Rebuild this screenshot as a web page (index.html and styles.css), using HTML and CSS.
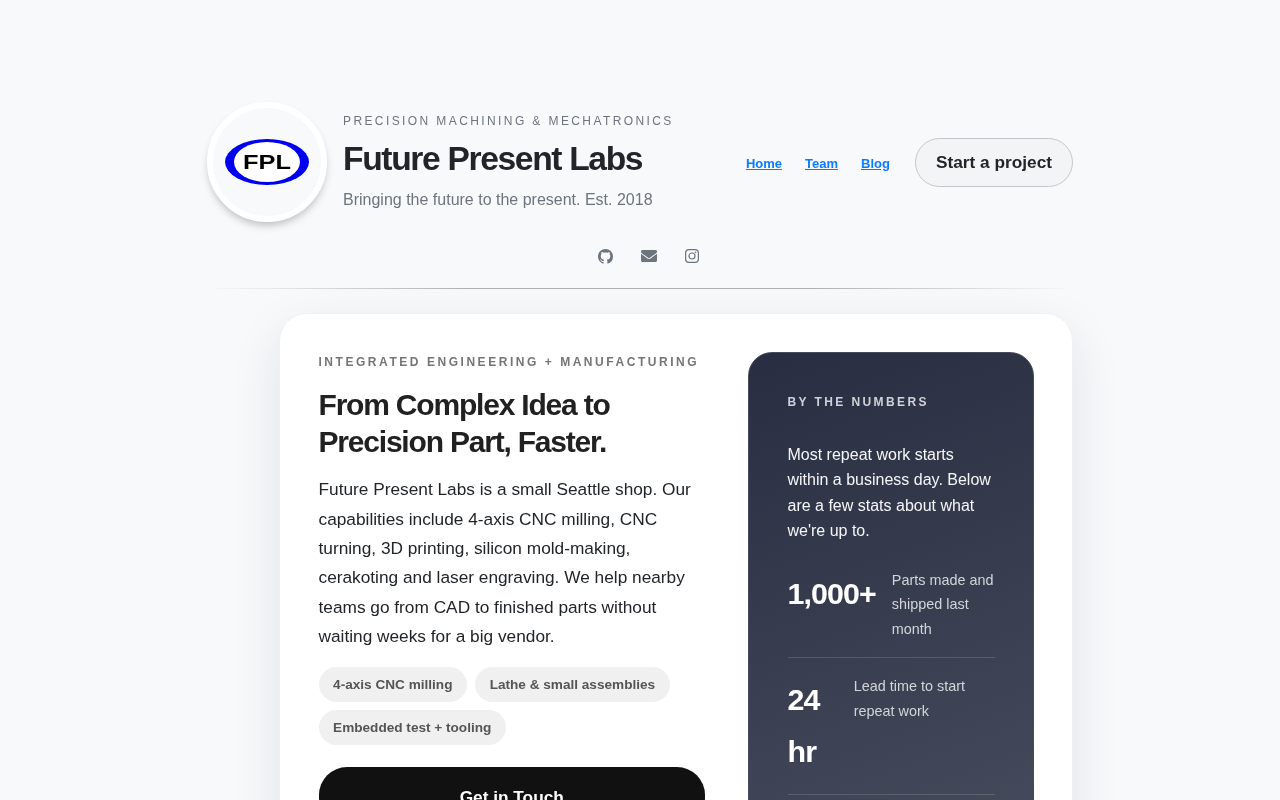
FILE: index.html
```html
<!DOCTYPE html>
<html lang="en">
<head>
  <meta charset="UTF-8" />
  <meta name="viewport" content="width=device-width, initial-scale=1.0"/>
  <title>Future Present Labs</title>
  <link rel="stylesheet" href="styles.css">
</head>
<body>
  <div class="page">
    <!-- Masthead -->
    <header class="masthead">
      <div class="logo">
        <svg width="88" height="52" viewBox="0 0 88 52">
          <ellipse cx="44" cy="26" rx="42" ry="23" fill="#0000f0"/>
          <ellipse cx="44" cy="26" rx="33" ry="20" fill="#fff"/>
          <text class="logo-text" x="44" y="33" text-anchor="middle" textLength="48" lengthAdjust="spacingAndGlyphs">FPL</text>
        </svg>
      </div>
      <div class="brand">
        <p class="kicker">PRECISION MACHINING &amp; MECHATRONICS</p>
        <h1>Future Present Labs</h1>
        <p class="tagline">Bringing the future to the present. Est. 2018</p>
      </div>
      <nav class="nav">
        <a href="#">Home</a>
        <a href="#">Team</a>
        <a href="#">Blog</a>
        <a href="#" class="btn-outline">Start a project</a>
      </nav>
    </header>

    <div class="socials">
      <a href="#" aria-label="GitHub">
        <svg width="15" height="15" viewBox="0 0 16 16"><path d="M8 0C3.58 0 0 3.58 0 8c0 3.54 2.29 6.53 5.47 7.59.4.07.55-.17.55-.38 0-.19-.01-.82-.01-1.49-2.01.37-2.53-.49-2.69-.94-.09-.23-.48-.94-.82-1.13-.28-.15-.68-.52-.01-.53.63-.01 1.08.58 1.23.82.72 1.21 1.87.87 2.33.66.07-.52.28-.87.51-1.07-1.78-.2-3.64-.89-3.64-3.95 0-.87.31-1.59.82-2.15-.08-.2-.36-1.02.08-2.12 0 0 .67-.21 2.2.82.64-.18 1.32-.27 2-.27.68 0 1.36.09 2 .27 1.53-1.04 2.2-.82 2.2-.82.44 1.1.16 1.92.08 2.12.51.56.82 1.27.82 2.15 0 3.07-1.87 3.75-3.65 3.95.29.25.54.73.54 1.48 0 1.07-.01 1.93-.01 2.2 0 .21.15.46.55.38A8.013 8.013 0 0016 8c0-4.42-3.58-8-8-8z"/></svg>
      </a>
      <a href="#" aria-label="Email">
        <svg width="16" height="16" viewBox="0 0 512 512"><path d="M502.3 190.8c3.9-3.1 9.7-.2 9.7 4.7V400c0 26.5-21.5 48-48 48H48c-26.5 0-48-21.5-48-48V195.6c0-5 5.7-7.8 9.7-4.7 22.4 17.4 52.1 39.5 154.1 113.6 21.1 15.4 56.7 47.8 92.2 47.6 35.7.3 72-32.8 92.3-47.6 102-74.1 131.6-96.3 154-113.7zM256 320c23.2.4 56.6-29.2 73.4-41.4 132.7-96.3 142.8-104.7 173.4-128.7 5.8-4.5 9.2-11.5 9.2-18.9v-19c0-26.5-21.5-48-48-48H48C21.5 64 0 85.5 0 112v19c0 7.4 3.4 14.3 9.2 18.9 30.6 23.9 40.7 32.4 173.4 128.7 16.8 12.2 50.2 41.8 73.4 41.4z"/></svg>
      </a>
      <a href="#" aria-label="Instagram">
        <svg width="14" height="14" viewBox="0 0 14 14" class="outline-icon">
          <rect x="0.6" y="0.6" width="12.8" height="12.8" rx="3.4"/>
          <circle cx="7" cy="7" r="3"/>
          <circle class="dot" cx="10.6" cy="3.4" r="0.8"/>
        </svg>
      </a>
    </div>

    <div class="divider"></div>

    <!-- Hero card -->
    <main class="hero">
      <section class="hero-copy">
        <p class="eyebrow">INTEGRATED ENGINEERING + MANUFACTURING</p>
        <h2>From Complex Idea to Precision Part, Faster.</h2>
        <p class="lead">Future Present Labs is a small Seattle shop. Our capabilities include 4-axis CNC milling, CNC turning, 3D printing, silicon mold-making, cerakoting and laser engraving. We help nearby teams go from CAD to finished parts without waiting weeks for a big vendor.</p>
        <div class="tags">
          <span class="tag">4-axis CNC milling</span>
          <span class="tag">Lathe &amp; small assemblies</span>
          <span class="tag">Embedded test + tooling</span>
        </div>
        <a href="#" class="btn-dark">Get in Touch</a>
      </section>

      <aside class="panel">
        <p class="panel-label">BY THE NUMBERS</p>
        <p class="panel-text">Most repeat work starts within a business day. Below are a few stats about what we're up to.</p>
        <div class="stat">
          <div class="stat-num">1,000+</div>
          <div class="stat-label">Parts made and shipped last month</div>
        </div>
        <div class="stat">
          <div class="stat-num">24 hr</div>
          <div class="stat-label">Lead time to start repeat work</div>
        </div>
        <div class="stat"></div>
      </aside>
    </main>
  </div>
</body>
</html>
```

FILE: styles.css
```css
* {
  margin: 0;
  padding: 0;
  box-sizing: border-box;
}
html, body {
  height: 100%;
  overflow: hidden;
}
body {
  background: #f8f9fb;
  font-family: "Liberation Sans", Arial, sans-serif;
  color: #212529;
}
.page {
  width: 866px;
  margin: 0 auto;
  padding-top: 102px;
  will-change: transform;
}
.masthead {
  display: flex;
  align-items: center;
}
.logo {
  width: 120px;
  height: 120px;
  flex: none;
  display: flex;
  align-items: center;
  justify-content: center;
  border: 6px solid #fff;
  border-radius: 50%;
  background: #f8f9fb;
  box-shadow: 0 5px 8px -2px rgba(0,0,0,0.25);
}
.logo-text {
  font-family: "Liberation Sans", Arial, sans-serif;
  font-size: 19.5px;
  font-weight: 700;
  fill: #000;
}
.brand {
  margin-left: 16px;
}
.kicker {
  font-size: 12px;
  letter-spacing: 0.2em;
  line-height: 18px;
  color: #6c757d;
}
h1 {
  margin-top: 7px;
  font-size: 33.6px;
  line-height: 44px;
  letter-spacing: -0.04em;
  color: #212529;
}
.tagline {
  margin-top: 7px;
  font-size: 16px;
  line-height: 24px;
  color: #6c757d;
}
.nav {
  margin-left: auto;
  display: flex;
  align-items: center;
  gap: 23px;
}
.nav a {
  font-size: 13px;
  font-weight: 700;
  color: #0a7cff;
  padding-top: 2px;
}
.nav .btn-outline {
  margin-left: 2px;
  padding: 1px 20px 0;
  height: 49px;
  display: flex;
  align-items: center;
  border: 1px solid #c4c6ca;
  border-radius: 25px;
  background: #f3f4f6;
  color: #212529;
  font-size: 17.28px;
  text-decoration: none;
}
.socials {
  display: flex;
  justify-content: center;
  align-items: center;
  gap: 28px;
  margin-top: 22px;
  padding-left: 17px;
  height: 24px;
}
.socials a {
  display: flex;
  color: #6c757d;
}
.socials svg {
  fill: currentColor;
}
.socials .outline-icon {
  fill: none;
  stroke: currentColor;
  stroke-width: 1.2;
}
.socials .outline-icon .dot {
  fill: currentColor;
  stroke: none;
}
.divider {
  height: 1px;
  margin-top: 20px;
  background: linear-gradient(to right, rgba(0,0,0,0), #b0b1b3 30%, #b0b1b3 70%, rgba(0,0,0,0));
}
.hero {
  width: 794px;
  margin: 23.5px 0 0 auto;
  display: grid;
  grid-template-columns: 386.5px 285.5px;
  justify-content: space-between;
  align-items: start;
  padding: 38.5px 38.5px 38px 38.5px;
  background: #fff;
  border: 1px solid #eef0f3;
  border-radius: 28px;
  box-shadow: 0 18px 50px rgba(20,25,40,0.1);
}
.hero-copy {
  padding-top: 1px;
}
.eyebrow {
  font-size: 12px;
  font-weight: 700;
  letter-spacing: 2.54px;
  line-height: 18px;
  color: #757575;
}
h2 {
  margin-top: 16px;
  font-size: 30px;
  line-height: 36.5px;
  letter-spacing: -0.04em;
  color: #212121;
}
.lead {
  margin-top: 15.2px;
  font-size: 17.28px;
  line-height: 29.4px;
  color: #212529;
}
.tags {
  display: flex;
  flex-wrap: wrap;
  gap: 8px;
  margin-top: 15.4px;
}
.tag {
  height: 35px;
  padding: 0 14.6px;
  display: flex;
  align-items: center;
  border-radius: 18px;
  background: #f0f0f0;
  color: #555;
  font-size: 13.6px;
  font-weight: 700;
}
.btn-dark {
  display: block;
  margin-top: 22px;
  padding: 18px 0;
  border-radius: 28px;
  background: #111;
  color: #fff;
  font-size: 17.28px;
  font-weight: 700;
  line-height: 24px;
  text-align: center;
  text-decoration: none;
}
.panel {
  padding: 39.5px 38px 39.5px 38.5px;
  min-height: 520px;
  border: 1.5px solid #454b5c;
  border-radius: 24px;
  background: linear-gradient(160deg, #282d41, #474d5d);
  color: #f5f6f8;
}
.panel-label {
  font-size: 12px;
  font-weight: 700;
  letter-spacing: 0.2em;
  line-height: 18px;
  color: #cfd2d8;
}
.panel-text {
  margin-top: 31px;
  font-size: 16px;
  line-height: 25.5px;
}
.stat {
  display: flex;
  gap: 16px;
  padding: 16px 0;
  border-bottom: 1px solid rgba(255,255,255,0.14);
}
.panel-text + .stat {
  margin-top: 8px;
}
.stat:last-child {
  border-bottom: none;
}
.stat-num {
  margin: -0.6px 0 0.6px;
  font-size: 30.4px;
  font-weight: 700;
  line-height: 52px;
  letter-spacing: -0.03em;
  color: #fff;
}
.stat-label {
  font-size: 14.4px;
  line-height: 24.5px;
  color: #d3d5da;
}
```
